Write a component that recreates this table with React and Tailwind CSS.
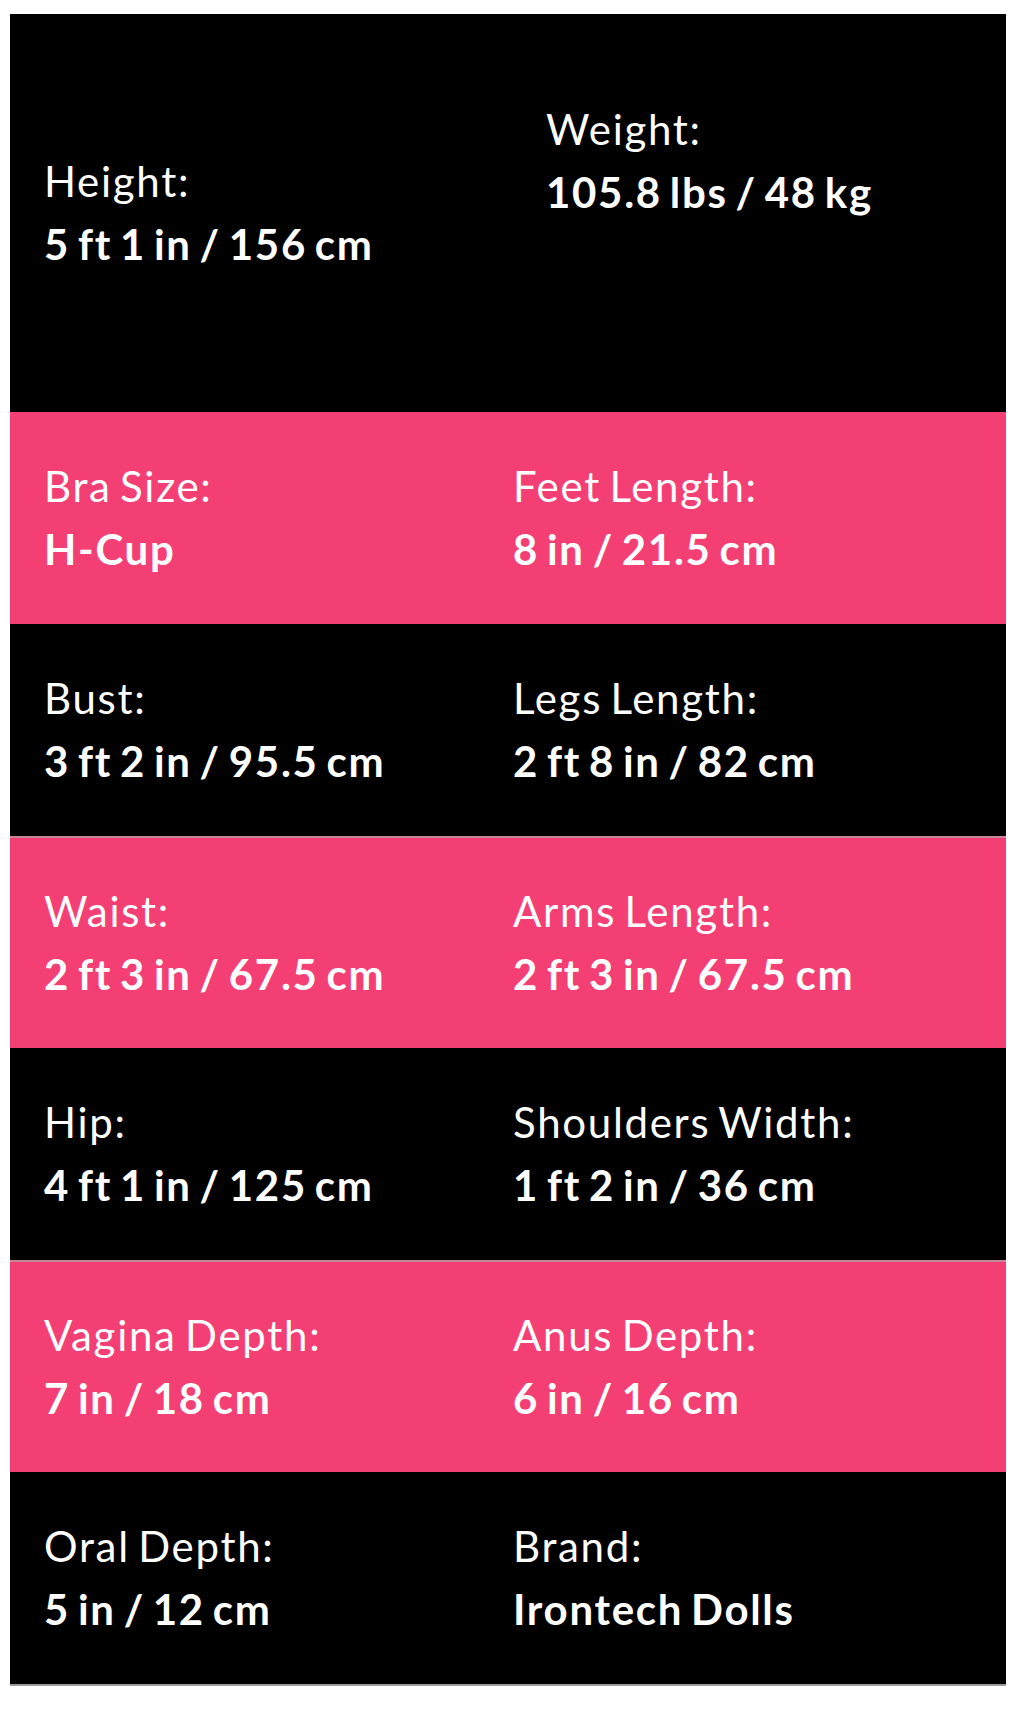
const rows = [
  { bg: 'pink', cells: [['Bra Size:', 'H-Cup'], ['Feet Length:', '8 in / 21.5 cm']] },
  { bg: 'black', cells: [['Bust:', '3 ft 2 in / 95.5 cm'], ['Legs Length:', '2 ft 8 in / 82 cm']] },
  { bg: 'pink', cells: [['Waist:', '2 ft 3 in / 67.5 cm'], ['Arms Length:', '2 ft 3 in / 67.5 cm']] },
  { bg: 'black', cells: [['Hip:', '4 ft 1 in / 125 cm'], ['Shoulders Width:', '1 ft 2 in / 36 cm']] },
  { bg: 'pink', cells: [['Vagina Depth:', '7 in / 18 cm'], ['Anus Depth:', '6 in / 16 cm']] },
  { bg: 'black', cells: [['Oral Depth:', '5 in / 12 cm'], ['Brand:', 'Irontech Dolls']] },
]

function Cell({ label, value }) {
  return (
    <div className="pl-[34px]">
      <div className="font-normal">{label}</div>
      <div className="font-bold">{value}</div>
    </div>
  )
}

export default function App() {
  return (
    <div className="bg-white min-h-[1715px] pt-[14px]">
      <div className="mx-[10px] w-[996px] text-white text-[42px] leading-[63px] tracking-[1.7px] [word-spacing:-4px] font-['Lato','Open_Sans',sans-serif] border-b-2 border-[#9a9a9a]">
        <div className="grid grid-cols-[469px_1fr] h-[398px] bg-black">
          <div className="self-center">
            <Cell label="Height:" value="5 ft 1 in / 156 cm" />
          </div>
          <div className="pt-[84px] pl-[33px]">
            <Cell label="Weight:" value="105.8 lbs / 48 kg" />
          </div>
        </div>
        {rows.map((row, i) => (
          <div
            key={i}
            className={
              'grid grid-cols-[469px_1fr] items-center h-[212px] ' +
              (row.bg === 'pink' ? 'bg-[#f43f75]' : 'bg-black') +
              (row.bg === 'pink' && i > 0 ? ' border-t-2 border-[#c4879a]' : '')
            }
          >
            {row.cells.map(([label, value]) => (
              <Cell key={label} label={label} value={value} />
            ))}
          </div>
        ))}
      </div>
    </div>
  )
}
